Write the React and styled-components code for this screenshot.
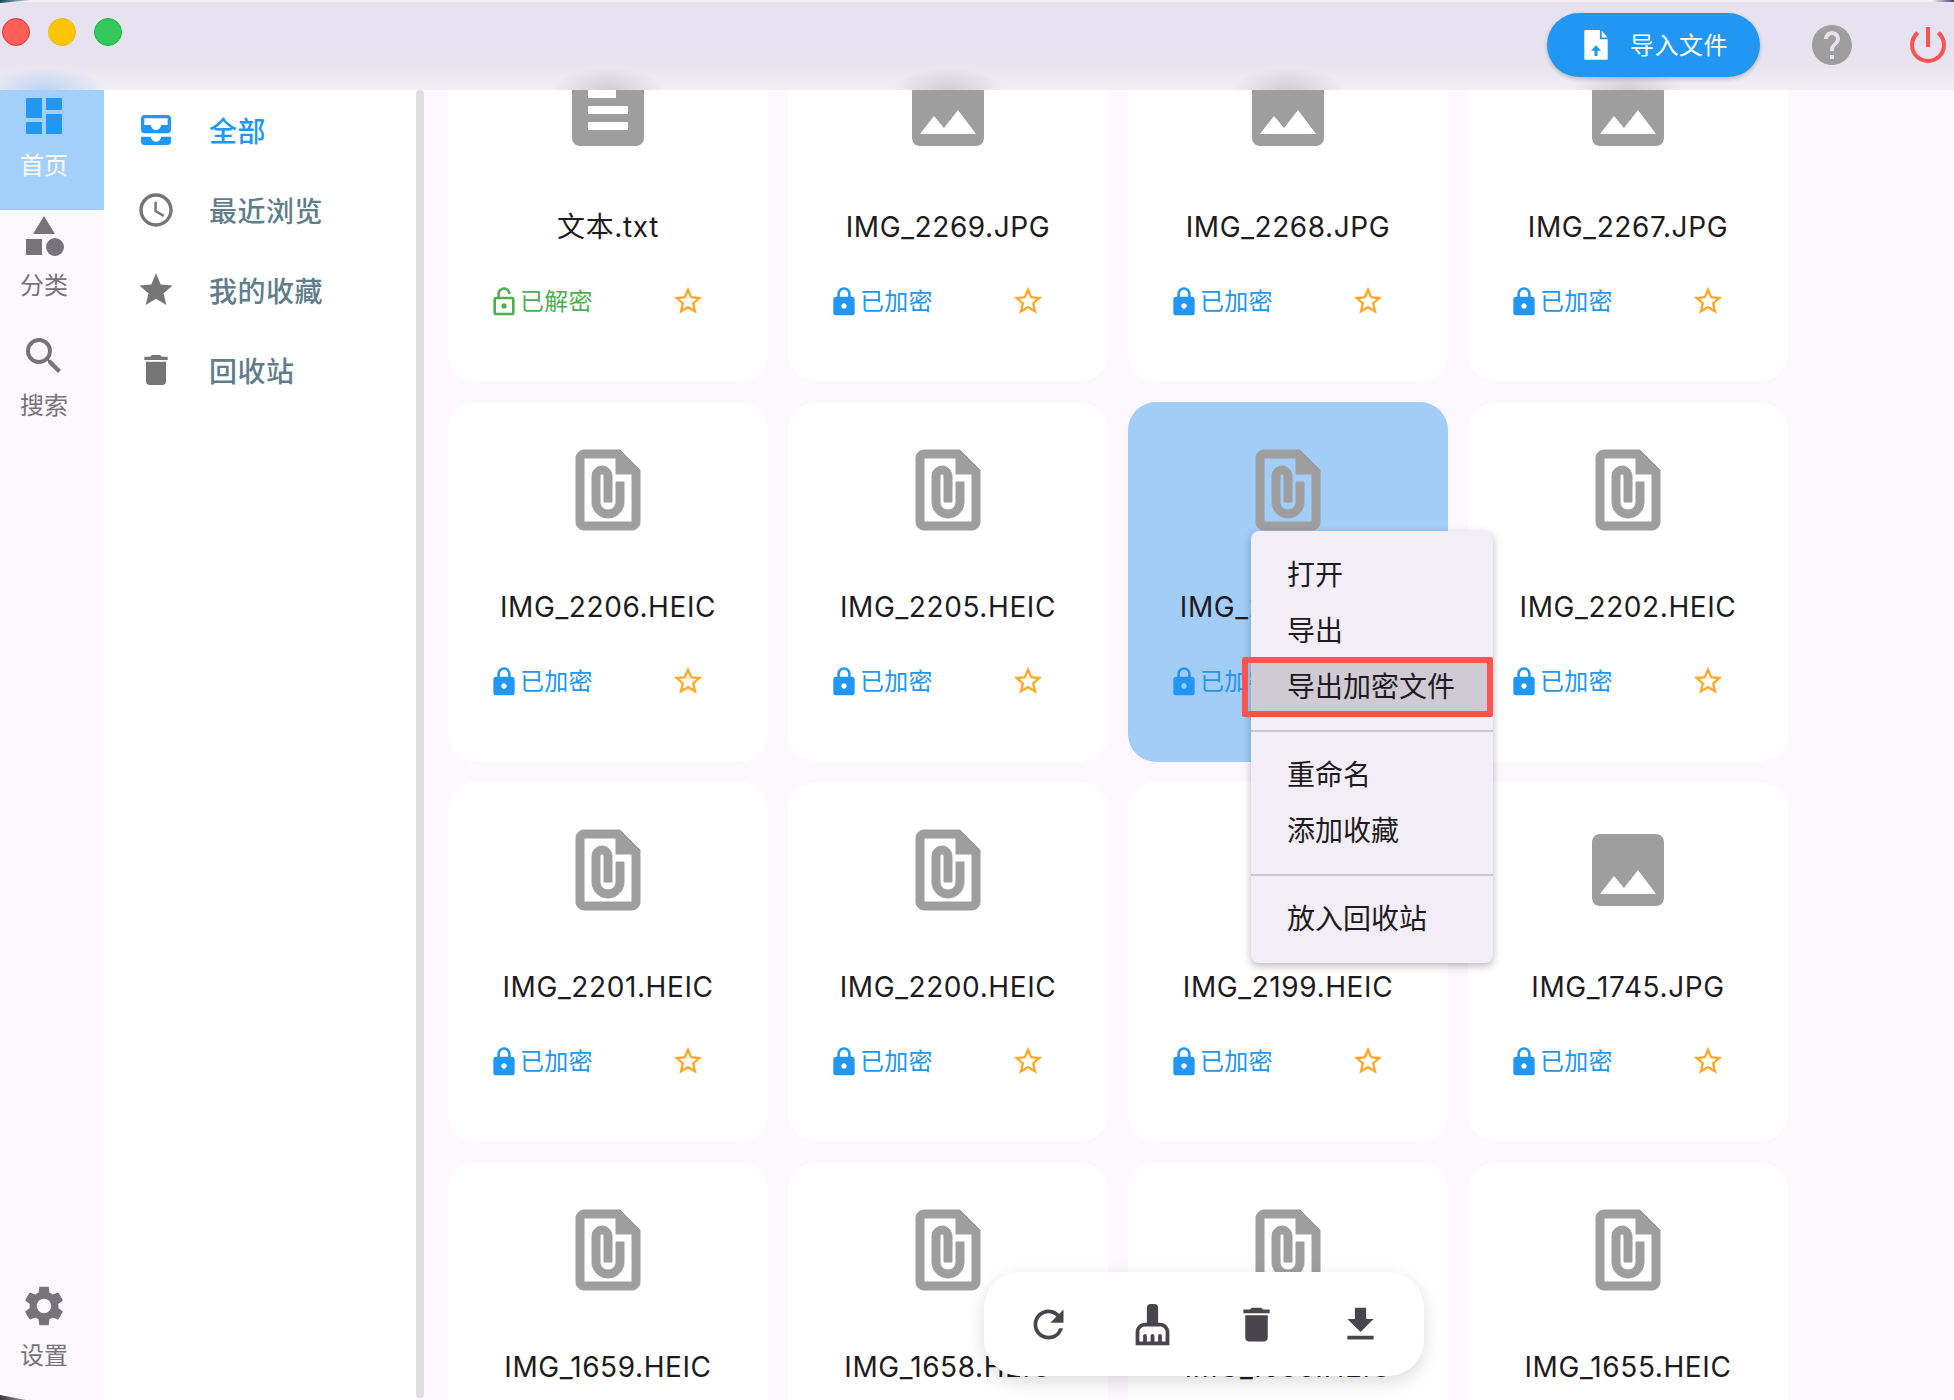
import React from 'react';
import styled, { createGlobalStyle } from 'styled-components';
import {
  MdDashboard, MdCategory, MdSearch, MdSettings, MdAllInbox, MdAccessTime, MdStar,
  MdStarBorder, MdDelete, MdLock, MdLockOpen, MdImage, MdFilePresent, MdRefresh,
  MdCleaningServices, MdFileDownload, MdHelp, MdPowerSettingsNew,
} from 'react-icons/md';

const FONT = `Inter, "Noto Sans CJK SC", "Liberation Sans", sans-serif`;

const GlobalStyle = createGlobalStyle`
  html, body { margin: 0; padding: 0; background: #fdf7fe; }
  * { box-sizing: border-box; }
  body { font-family: ${FONT}; }
`;

const Window = styled.div`
  position: relative;
  display: flex;
  width: 1954px;
  height: 1400px;
  overflow: hidden;
  background: #fdf7fe;
`;

// the soft spots along the bottom edge are the scrolled content glowing through the bar
const iconGlow = x => `radial-gradient(ellipse 56px 22px at ${x}px 100%, rgba(125, 121, 130, 0.28), rgba(125, 121, 130, 0))`;

const TitleBar = styled.header`
  position: absolute;
  top: 0;
  left: 0;
  right: 0;
  height: 90px;
  display: flex;
  align-items: flex-start;
  justify-content: space-between;
  border-top: 2px solid #f3f0f6;
  background:
    radial-gradient(ellipse 62px 22px at 44px 100%, rgba(110, 175, 240, 0.42), rgba(110, 175, 240, 0)),
    ${iconGlow(608)},
    ${iconGlow(948)},
    ${iconGlow(1288)},
    ${iconGlow(1628)},
    linear-gradient(180deg, #e7e2ef 0%, #e7e2ef 62%, #f1eef6 100%);
  z-index: 5;
`;

// bits of the desktop showing past the rounded window corners
const CornerTopLeft = styled.span`
  position: absolute;
  top: 0;
  left: 0;
  width: 32px;
  height: 3px;
  background: linear-gradient(90deg, #1c4a5c, rgba(120, 160, 175, 0.3));
  clip-path: polygon(0 0, 100% 0, 0 100%);
  z-index: 6;
`;

const CornerTopRight = styled.span`
  position: absolute;
  top: 0;
  right: 0;
  width: 22px;
  height: 2px;
  background: linear-gradient(90deg, rgba(90, 80, 130, 0), #4a4270);
  z-index: 6;
`;

const CornerBottomLeft = styled.span`
  position: absolute;
  bottom: 0;
  left: 0;
  width: 26px;
  height: 5px;
  background: linear-gradient(90deg, #3a3a3a, rgba(60, 60, 60, 0.5));
  clip-path: polygon(0 0, 100% 100%, 0 100%);
  z-index: 6;
`;

const Lights = styled.div`
  display: flex;
  gap: 18px;
  padding: 16px 0 0 2px;
`;

const Light = styled.span`
  width: 28px;
  height: 28px;
  border-radius: 50%;
  background: ${p => p.$color};
  border: 1px solid ${p => p.$edge};
`;

const TitleActions = styled.div`
  display: flex;
  align-items: center;
  height: 64px;
  margin-top: 11px;
  padding-right: 2px;
`;

const ImportButton = styled.button`
  width: 213px;
  height: 64px;
  display: flex;
  align-items: center;
  padding: 0 0 3px 31px;
  border: 0;
  border-radius: 32px;
  background: #2196f3;
  color: #fff;
  font: 24px ${FONT};
  letter-spacing: 0.5px;
  box-shadow: 0 2px 4px rgba(0, 0, 0, 0.22);
  svg { margin: 3px 16px 0 0; }
`;

const HelpIcon = styled(MdHelp)`
  margin-left: 48px;
  color: #9e9e9e;
`;

const PowerIcon = styled(MdPowerSettingsNew)`
  margin-left: 48px;
  color: #ff5252;
`;

const Rail = styled.nav`
  flex: 0 0 104px;
  display: flex;
  flex-direction: column;
  padding-top: 70px;
  background: #fdf7fe;
`;

const RailItem = styled.div`
  display: flex;
  flex-direction: column;
  align-items: center;
  height: ${p => (p.$active ? 140 : 120)}px;
  padding: ${p => (p.$active ? 22 : 2)}px 16px 0 0;
  background: ${p => (p.$active ? '#a3d0fb' : 'transparent')};
  margin-top: ${p => (p.$bottom ? 'auto' : 0)};
  svg { flex: none; color: ${p => (p.$active ? '#2196f3' : '#78727a')}; }
`;

const RailLabel = styled.span`
  margin-top: 10px;
  font-size: 24px;
  line-height: 32px;
  color: ${p => (p.$active ? '#fff' : '#78727a')};
`;

const SubMenu = styled.aside`
  flex: 0 0 312px;
  padding: 90px 0 0 32px;
  background: #fff;
`;

const SubItem = styled.div`
  display: flex;
  align-items: center;
  height: 80px;
  gap: 33px;
  color: ${p => (p.$active ? '#2196f3' : '#607d8b')};
  font-size: 28px;
  font-weight: 500;
  letter-spacing: 0.5px;
  svg { color: ${p => (p.$active ? '#2196f3' : '#757575')}; }
`;

const ScrollBar = styled.div`
  flex: 0 0 8px;
  height: 1308px;
  margin-top: 90px;
  border-radius: 4px;
  background: #dedede;
`;

const Content = styled.main`
  flex: 1;
  padding: 22px 0 0 24px;
`;

const CardGrid = styled.div`
  display: grid;
  grid-template-columns: repeat(4, 320px);
  grid-auto-rows: 360px;
  gap: 20px;
`;

const Card = styled.div`
  display: flex;
  flex-direction: column;
  align-items: center;
  padding-top: 40px;
  border-radius: 28px;
  background: ${p => (p.$selected ? '#a2cdf7' : '#fff')};
  svg { flex: none; }
`;

const FileIcon = styled.div`
  height: 96px;
  color: #9e9e9e;
`;

// a bit heavier than the stock glyph
const AttachmentIcon = styled(MdFilePresent)`
  path:not([fill='none']) {
    stroke: currentColor;
    stroke-width: 0.25;
  }
  path[fill='none'] {
    stroke: none;
  }
`;

const FileName = styled.div`
  margin-top: 49px;
  height: 40px;
  line-height: 40px;
  font-size: 28px;
  letter-spacing: 0.6px;
  color: #1d1b20;
  white-space: nowrap;
`;

const StatusRow = styled.div`
  align-self: stretch;
  display: flex;
  align-items: center;
  justify-content: space-between;
  margin-top: 39px;
  padding: 0 63px 0 40px;
`;

const Status = styled.div`
  display: flex;
  align-items: center;
  font-size: 24px;
  line-height: 32px;
  letter-spacing: 0.2px;
  color: ${p => (p.$open ? '#4caf50' : '#2196f3')};
`;

const FavIcon = styled(MdStarBorder)`
  margin-top: -2px;
  color: #ffa726;
`;

// the open lock in the app has its gap on the right side
const OpenLock = styled(MdLockOpen)`
  transform: scaleX(-1);
`;

const ContextMenu = styled.div`
  position: absolute;
  left: 1251px;
  top: 531px;
  width: 242px;
  padding: 16px 0;
  border-radius: 8px;
  background: #f3edf7;
  box-shadow: 0 3px 8px rgba(0, 0, 0, 0.28);
  z-index: 3;
`;

const MenuItem = styled.div`
  position: relative;
  height: 56px;
  line-height: 56px;
  padding-left: 36px;
  font-size: 28px;
  color: #1d1b20;
  background: ${p => (p.$hover ? '#cfcad4' : 'transparent')};
  ${p => p.$hover && `
    &::after {
      content: '';
      position: absolute;
      left: -9px;
      right: 0;
      top: -2px;
      bottom: -2px;
      border: 6px solid #ff5252;
      border-radius: 2px;
    }
  `}
`;

const MenuDivider = styled.hr`
  margin: 15px 0;
  height: 2px;
  border: 0;
  background: #cac4d0;
`;

const FloatingBar = styled.div`
  position: absolute;
  left: 984px;
  top: 1272px;
  width: 440px;
  height: 104px;
  display: flex;
  align-items: center;
  padding: 0 12px;
  border-radius: 36px;
  background: #fff;
  box-shadow: 0 6px 18px rgba(0, 0, 0, 0.14);
  z-index: 4;
`;

const BarButton = styled.div`
  flex: 1;
  display: flex;
  justify-content: center;
  color: #49454f;
`;

// row 1 text icon has the short line on top, not the same as material "article"
const TextFileIcon = ({ size }) => (
  <svg width={size} height={size} viewBox="0 0 24 24" fill="currentColor">
    <path d="M19 3H5c-1.1 0-2 .9-2 2v14c0 1.1.9 2 2 2h14c1.1 0 2-.9 2-2V5c0-1.1-.9-2-2-2zM7 7h7v2H7V7zm10 10H7v-2h10v2zm0-4H7v-2h10v2z" />
  </svg>
);

// solid page with a blue arrow, the material one is only outlined
const ImportIcon = () => (
  <svg width="36" height="36" viewBox="0 0 24 24">
    <path fill="#fff" d="M14.6 2H5.2c-.6 0-1 .4-1 1v18c0 .5.4.9.9.9h13.8c.5 0 .9-.4.9-.9V8.2h-5.2V2z" />
    <path fill="#fff" d="M15.8 2.4l3.8 4.6h-3.8z" />
    <path fill="#2196f3" d="M12 12.2l-3.4 3.6h2.4v3.6h2v-3.6h2.4z" />
  </svg>
);

const FILES = [
  { name: '文本.txt', kind: 'text', open: true },
  { name: 'IMG_2269.JPG', kind: 'image' },
  { name: 'IMG_2268.JPG', kind: 'image' },
  { name: 'IMG_2267.JPG', kind: 'image' },
  { name: 'IMG_2206.HEIC' },
  { name: 'IMG_2205.HEIC' },
  { name: 'IMG_2203.HEIC', selected: true },
  { name: 'IMG_2202.HEIC' },
  { name: 'IMG_2201.HEIC' },
  { name: 'IMG_2200.HEIC' },
  { name: 'IMG_2199.HEIC' },
  { name: 'IMG_1745.JPG', kind: 'image' },
  { name: 'IMG_1659.HEIC' },
  { name: 'IMG_1658.HEIC' },
  { name: 'IMG_1656.HEIC' },
  { name: 'IMG_1655.HEIC' },
];

function renderFileIcon(kind) {
  if (kind === 'text') return <TextFileIcon size={96} />;
  if (kind === 'image') return <MdImage size={96} />;
  return <AttachmentIcon size={96} />;
}

export default function App() {
  return (
    <Window>
      <GlobalStyle />
      <TitleBar>
        <Lights>
          <Light $color="#ff5f57" $edge="#f0303a" />
          <Light $color="#fdc500" $edge="#f0b800" />
          <Light $color="#34c759" $edge="#16b83c" />
        </Lights>
        <TitleActions>
          <ImportButton><ImportIcon />导入文件</ImportButton>
          <HelpIcon size={48} />
          <PowerIcon size={48} />
        </TitleActions>
      </TitleBar>
      <CornerTopLeft />
      <CornerTopRight />
      <CornerBottomLeft />

      <Rail>
        <RailItem $active><MdDashboard size={48} /><RailLabel $active>首页</RailLabel></RailItem>
        <RailItem><MdCategory size={48} /><RailLabel>分类</RailLabel></RailItem>
        <RailItem><MdSearch size={48} /><RailLabel>搜索</RailLabel></RailItem>
        <RailItem $bottom><MdSettings size={48} /><RailLabel>设置</RailLabel></RailItem>
      </Rail>

      <SubMenu>
        <SubItem $active><MdAllInbox size={40} />全部</SubItem>
        <SubItem><MdAccessTime size={40} />最近浏览</SubItem>
        <SubItem><MdStar size={40} />我的收藏</SubItem>
        <SubItem><MdDelete size={40} />回收站</SubItem>
      </SubMenu>
      <ScrollBar />

      <Content>
        <CardGrid>
          {FILES.map(file => (
            <Card key={file.name} $selected={file.selected}>
              <FileIcon>{renderFileIcon(file.kind)}</FileIcon>
              <FileName>{file.name}</FileName>
              <StatusRow>
                <Status $open={file.open}>
                  {file.open ? <OpenLock size={32} /> : <MdLock size={32} />}
                  {file.open ? '已解密' : '已加密'}
                </Status>
                <FavIcon size={34} />
              </StatusRow>
            </Card>
          ))}
        </CardGrid>
      </Content>

      <ContextMenu>
        <MenuItem>打开</MenuItem>
        <MenuItem>导出</MenuItem>
        <MenuItem $hover>导出加密文件</MenuItem>
        <MenuDivider />
        <MenuItem>重命名</MenuItem>
        <MenuItem>添加收藏</MenuItem>
        <MenuDivider />
        <MenuItem>放入回收站</MenuItem>
      </ContextMenu>

      <FloatingBar>
        <BarButton><MdRefresh size={45} /></BarButton>
        <BarButton><MdCleaningServices size={45} /></BarButton>
        <BarButton><MdDelete size={45} /></BarButton>
        <BarButton><MdFileDownload size={45} /></BarButton>
      </FloatingBar>
    </Window>
  );
}
